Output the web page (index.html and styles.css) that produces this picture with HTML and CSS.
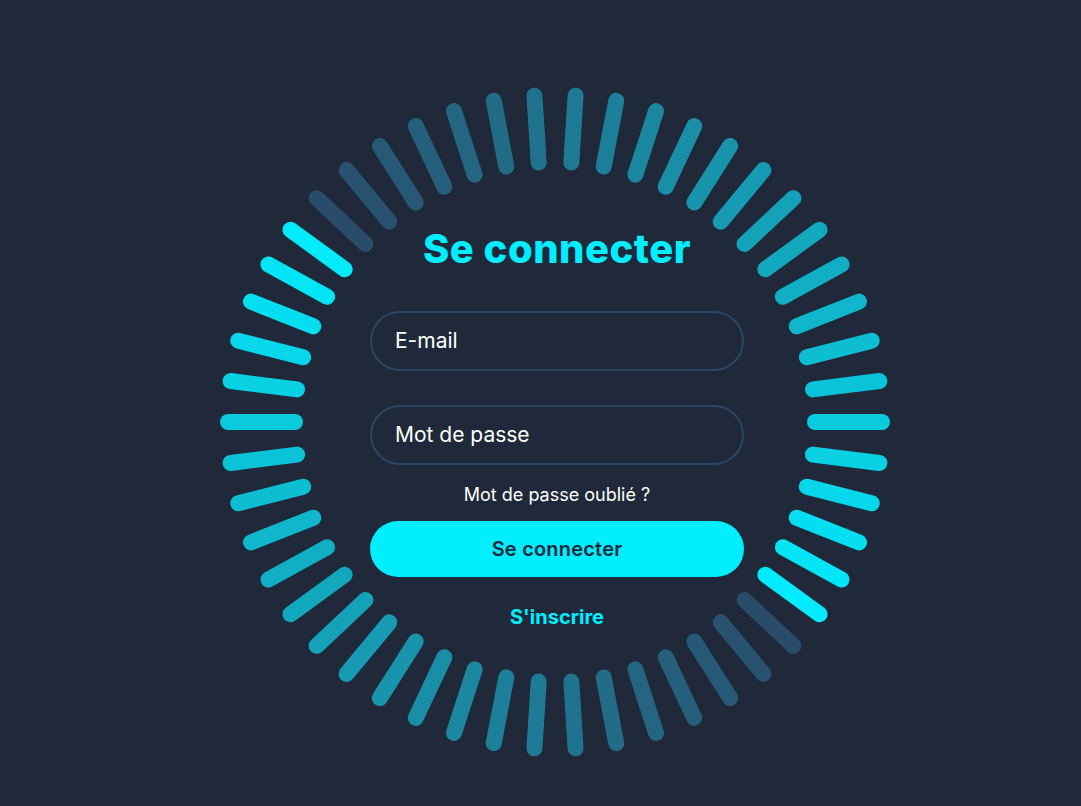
FILE: index.html
```html
<!DOCTYPE html>
<html lang="fr">
<head>
<meta charset="utf-8">
<title>Se connecter</title>
<link rel="stylesheet" href="styles.css">
</head>
<body>
<main class="page">
  <div class="ring">
    <span class="bar" style="--i:0;--c:#0acade"></span>
    <span class="bar" style="--i:1;--c:#08d1e4"></span>
    <span class="bar" style="--i:2;--c:#06d7ea"></span>
    <span class="bar" style="--i:3;--c:#04def0"></span>
    <span class="bar" style="--i:4;--c:#02e5f6"></span>
    <span class="bar" style="--i:5;--c:#01ebfd"></span>
    <span class="bar" style="--i:6;--c:#2b4b6a"></span>
    <span class="bar" style="--i:7;--c:#295270"></span>
    <span class="bar" style="--i:8;--c:#275876"></span>
    <span class="bar" style="--i:9;--c:#265f7c"></span>
    <span class="bar" style="--i:10;--c:#246682"></span>
    <span class="bar" style="--i:11;--c:#226c88"></span>
    <span class="bar" style="--i:12;--c:#20738e"></span>
    <span class="bar" style="--i:13;--c:#1f7a95"></span>
    <span class="bar" style="--i:14;--c:#1d809b"></span>
    <span class="bar" style="--i:15;--c:#1b87a1"></span>
    <span class="bar" style="--i:16;--c:#198ea7"></span>
    <span class="bar" style="--i:17;--c:#1894ad"></span>
    <span class="bar" style="--i:18;--c:#169bb3"></span>
    <span class="bar" style="--i:19;--c:#14a2b9"></span>
    <span class="bar" style="--i:20;--c:#12a9bf"></span>
    <span class="bar" style="--i:21;--c:#11afc5"></span>
    <span class="bar" style="--i:22;--c:#0fb6cc"></span>
    <span class="bar" style="--i:23;--c:#0dbdd2"></span>
    <span class="bar" style="--i:24;--c:#0bc3d8"></span>
    <span class="bar" style="--i:25;--c:#0acade"></span>
    <span class="bar" style="--i:26;--c:#08d1e4"></span>
    <span class="bar" style="--i:27;--c:#06d7ea"></span>
    <span class="bar" style="--i:28;--c:#04def0"></span>
    <span class="bar" style="--i:29;--c:#02e5f6"></span>
    <span class="bar" style="--i:30;--c:#01ebfd"></span>
    <span class="bar" style="--i:31;--c:#2b4b6a"></span>
    <span class="bar" style="--i:32;--c:#295270"></span>
    <span class="bar" style="--i:33;--c:#275876"></span>
    <span class="bar" style="--i:34;--c:#265f7c"></span>
    <span class="bar" style="--i:35;--c:#246682"></span>
    <span class="bar" style="--i:36;--c:#226c88"></span>
    <span class="bar" style="--i:37;--c:#20738e"></span>
    <span class="bar" style="--i:38;--c:#1f7a95"></span>
    <span class="bar" style="--i:39;--c:#1d809b"></span>
    <span class="bar" style="--i:40;--c:#1b87a1"></span>
    <span class="bar" style="--i:41;--c:#198ea7"></span>
    <span class="bar" style="--i:42;--c:#1894ad"></span>
    <span class="bar" style="--i:43;--c:#169bb3"></span>
    <span class="bar" style="--i:44;--c:#14a2b9"></span>
    <span class="bar" style="--i:45;--c:#12a9bf"></span>
    <span class="bar" style="--i:46;--c:#11afc5"></span>
    <span class="bar" style="--i:47;--c:#0fb6cc"></span>
    <span class="bar" style="--i:48;--c:#0dbdd2"></span>
    <span class="bar" style="--i:49;--c:#0bc3d8"></span>

    <form class="login">
      <h2 class="title">Se connecter</h2>
      <div class="field">
        <input type="email" id="email" class="field-input" aria-label="E-mail">
        <label for="email" class="field-label">E-mail</label>
      </div>
      <div class="field field-second">
        <input type="password" id="password" class="field-input" aria-label="Mot de passe">
        <label for="password" class="field-label">Mot de passe</label>
      </div>
      <a href="#" class="forgot">Mot de passe oublié ?</a>
      <button type="button" class="btn">Se connecter</button>
      <a href="#" class="signup">S'inscrire</a>
    </form>
  </div>
</main>
</body>
</html>
```

FILE: styles.css
```css
* {
  box-sizing: border-box;
}

html, body {
  margin: 0;
  padding: 0;
}

body {
  background: #1f293a;
  font-family: "Inter", "Liberation Sans", sans-serif;
  color: #fff;
  min-height: 100vh;
  overflow: hidden;
}

.page {
  padding: 87px 0 0 220px;
}

.ring {
  position: relative;
  width: 670px;
  height: 670px;
  padding: 138px 0 0 4px;
  display: flex;
  flex-direction: column;
  align-items: center;
}

.bar {
  position: absolute;
  left: 587px;
  top: 327px;
  width: 83px;
  height: 16px;
  border-radius: 8px;
  background: var(--c, #2c4766);
  transform-origin: -252px 8px;
  transform: rotate(calc(var(--i) * 7.2deg));
}

.login {
  width: 374px;
  display: flex;
  flex-direction: column;
  align-items: center;
}

.title {
  margin: 0;
  font-size: 40px;
  line-height: 48px;
  font-weight: 800;
  color: #00eeff;
  letter-spacing: 0.5px;
}

.field {
  position: relative;
  width: 100%;
  height: 60px;
  margin-top: 38px;
  border: 2px solid #2c4766;
  border-radius: 30px;
  display: flex;
  align-items: center;
  padding: 0 20px 0 23px;
}

.field-second {
  margin-top: 34px;
}

.field-input {
  position: absolute;
  inset: 0;
  width: 100%;
  height: 100%;
  background: transparent;
  border: none;
  outline: none;
  border-radius: 30px;
}

.field-label {
  position: relative;
  font-size: 21px;
  line-height: 26px;
  color: #fff;
  pointer-events: none;
}

.forgot {
  margin-top: 19px;
  font-size: 18px;
  line-height: 22px;
  color: #fff;
  text-decoration: none;
}

.btn {
  margin-top: 15px;
  width: 100%;
  height: 56px;
  border: none;
  border-radius: 28px;
  background: #00eeff;
  color: #1f293a;
  font-family: "Inter", "Liberation Sans", sans-serif;
  font-size: 20px;
  font-weight: 600;
  letter-spacing: 0.2px;
  cursor: pointer;
}

.signup {
  margin-top: 28px;
  font-size: 20px;
  line-height: 24px;
  font-weight: 700;
  color: #00eeff;
  text-decoration: none;
}
```
